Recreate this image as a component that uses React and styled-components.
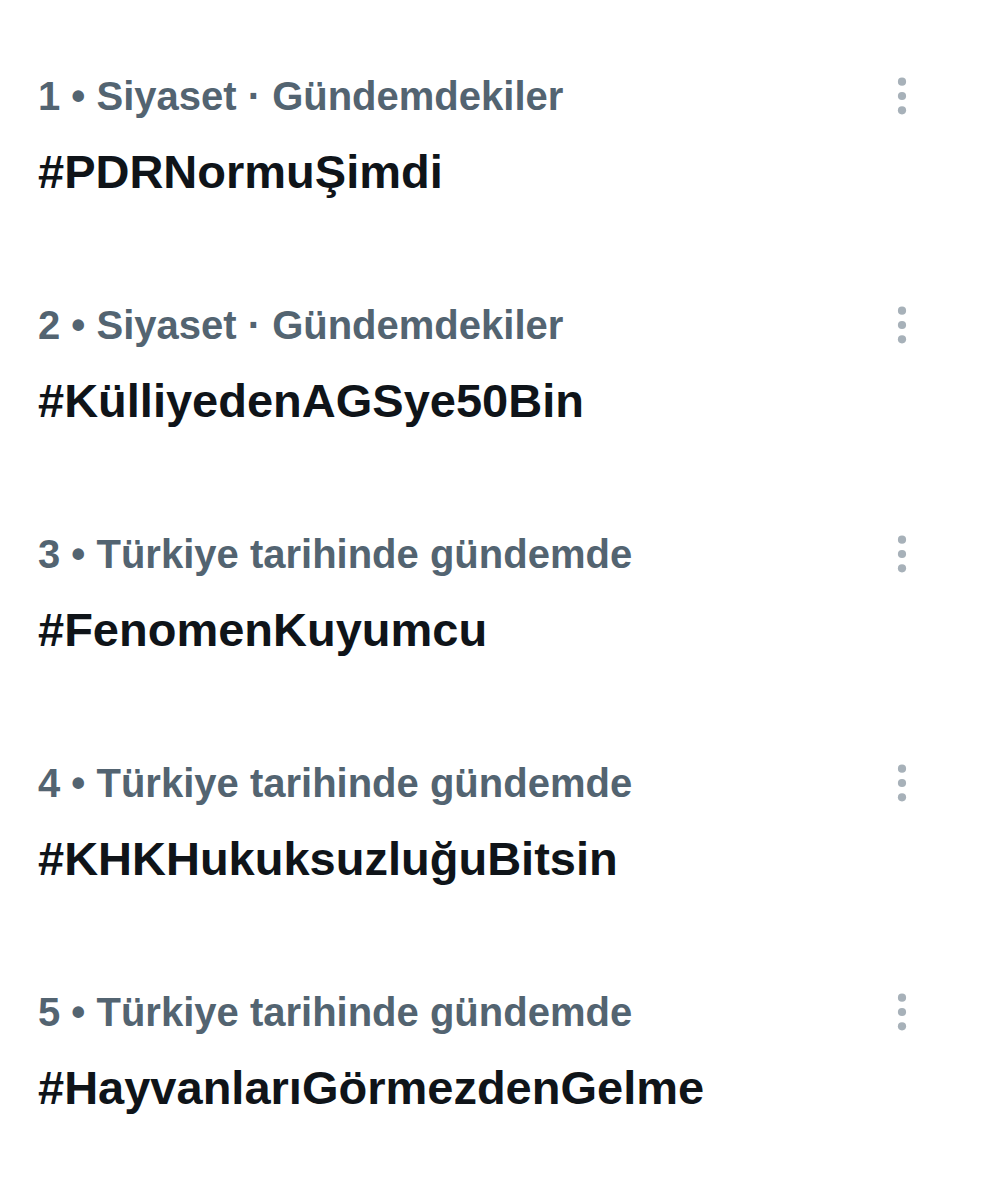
import styled, { createGlobalStyle } from "styled-components"

const GlobalStyle = createGlobalStyle`
    body {
        margin: 0;
        background-color: #ffffff;
        font-family: "Liberation Sans", Arial, sans-serif;
    }
`;

const List = styled.ol`
    margin: 0;
    padding: 68px 59px 0px 38px;
    list-style: none;
`;

const Trend = styled.li`
    display: flex;
    justify-content: space-between;
    align-items: flex-start;
    padding-bottom: 89px;

    &:last-child {
        padding-bottom: 60px;
    }
`;

const Info = styled.div`
    display: flex;
    flex-direction: column;
    align-items: flex-start;
    gap: 12px;
`;

const Category = styled.span`
    color: #536471;
    font-size: 40px;
    font-weight: 700;
    line-height: 56px;
`;

const Topic = styled.a`
    color: #0f1419;
    font-size: 47px;
    font-weight: 700;
    line-height: 72px;
    text-decoration: none;
`;

const MoreButton = styled.button`
    display: flex;
    align-items: center;
    justify-content: center;
    width: 56px;
    height: 56px;
    padding: 0;
    border: none;
    background: none;
    color: #a7b1b9;
    cursor: pointer;
`;

const trends = [
  { id: 1, category: "Siyaset · Gündemdekiler", topic: "#PDRNormuŞimdi" },
  { id: 2, category: "Siyaset · Gündemdekiler", topic: "#KülliyedenAGSye50Bin" },
  { id: 3, category: "Türkiye tarihinde gündemde", topic: "#FenomenKuyumcu" },
  { id: 4, category: "Türkiye tarihinde gündemde", topic: "#KHKHukuksuzluğuBitsin" },
  { id: 5, category: "Türkiye tarihinde gündemde", topic: "#HayvanlarıGörmezdenGelme" },
];

const MoreIcon = () => (
  <svg width="10" height="38" viewBox="0 0 10 38" fill="currentColor" aria-hidden="true">
    <circle cx="5" cy="4.7" r="4.1" />
    <circle cx="5" cy="19" r="4.1" />
    <circle cx="5" cy="33.3" r="4.1" />
  </svg>
);

const App = () => {
  return (
    <>
      <GlobalStyle />
      <List>
        {trends.map((item) => (
          <Trend key={item.id}>
            <Info>
              <Category>{item.id} • {item.category}</Category>
              <Topic href="#">{item.topic}</Topic>
            </Info>
            <MoreButton aria-label="Daha fazla">
              <MoreIcon />
            </MoreButton>
          </Trend>
        ))}
      </List>
    </>
  );
};

export default App;
